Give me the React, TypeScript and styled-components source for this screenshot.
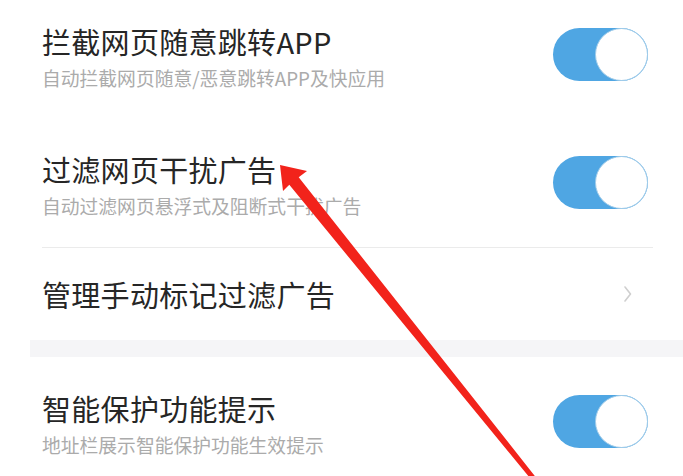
import React from "react";
import styled, { createGlobalStyle } from "styled-components";

const Global = createGlobalStyle`
  html, body {
    margin: 0;
    padding: 0;
    background: #ffffff;
    overflow: hidden;
  }
  body {
    font-family: "Noto Sans CJK SC", "Noto Sans", sans-serif;
  }
`;

const Page = styled.div`
  position: relative;
  width: 683px;
  height: 476px;
  overflow: hidden;
  background: #ffffff;
`;

const List = styled.div`
  display: flex;
  flex-direction: column;
  margin-top: -10px;
`;

const Row = styled.div<{ $h: number }>`
  display: flex;
  align-items: center;
  justify-content: space-between;
  height: ${(p) => p.$h}px;
  padding: 0 35px 0 42px;
  box-sizing: border-box;
`;

const TextBlock = styled.div`
  display: flex;
  flex-direction: column;
  gap: 6px;
  padding-top: 4px;
`;

const Title = styled.div`
  font-size: 29px;
  line-height: 36px;
  color: #262626;
  letter-spacing: 0.3px;
`;

const Subtitle = styled.div`
  font-size: 18.8px;
  line-height: 25px;
  color: #ababab;
`;

const Divider = styled.div`
  height: 1px;
  background: #ebebeb;
  margin: 0 30px 0 42px;
`;

const Band = styled.div`
  height: 17px;
  background: #f5f5f7;
  margin-left: 30px;
`;

const Toggle = styled.div`
  display: flex;
  justify-content: flex-end;
  width: 95px;
  height: 53px;
  border-radius: 27px;
  background: #4fa6e3;
  flex-shrink: 0;
`;

const Knob = styled.div`
  width: 53px;
  height: 53px;
  border-radius: 50%;
  background: #ffffff;
  border: 1.5px solid #9fcbe9;
  box-sizing: border-box;
`;

const Chevron = styled.svg`
  width: 10px;
  height: 18px;
  margin-right: 15px;
`;

const ArrowLayer = styled.svg`
  position: absolute;
  left: 0;
  top: 0;
  width: 683px;
  height: 476px;
  pointer-events: none;
`;

type SwitchRowProps = { title: string; sub: string; h: number };

const SwitchRow = ({ title, sub, h }: SwitchRowProps) => (
  <Row $h={h}>
    <TextBlock>
      <Title>{title}</Title>
      <Subtitle>{sub}</Subtitle>
    </TextBlock>
    <Toggle>
      <Knob />
    </Toggle>
  </Row>
);

export default function App() {
  return (
    <Page>
      <Global />
      <List>
        <SwitchRow h={128} title="拦截网页随意跳转APP" sub="自动拦截网页随意/恶意跳转APP及快应用" />
        <SwitchRow h={129} title="过滤网页干扰广告" sub="自动过滤网页悬浮式及阻断式干扰广告" />
        <Divider />
        <Row $h={92}>
          <Title>管理手动标记过滤广告</Title>
          <Chevron viewBox="0 0 10 18">
            <path d="M2 2 L7.5 9 L2 16" fill="none" stroke="#cfcfcf" strokeWidth="1.6" strokeLinecap="round" strokeLinejoin="round" />
          </Chevron>
        </Row>
        <Band />
        <SwitchRow h={128} title="智能保护功能提示" sub="地址栏展示智能保护功能生效提示" />
      </List>
      <ArrowLayer viewBox="0 0 683 476">
        <polygon
          points="280,165 307,171 298.7,177.2 536.7,478.4 532.9,481.6 289.3,184.8 283,191"
          fill="#f2231b"
        />
      </ArrowLayer>
    </Page>
  );
}
